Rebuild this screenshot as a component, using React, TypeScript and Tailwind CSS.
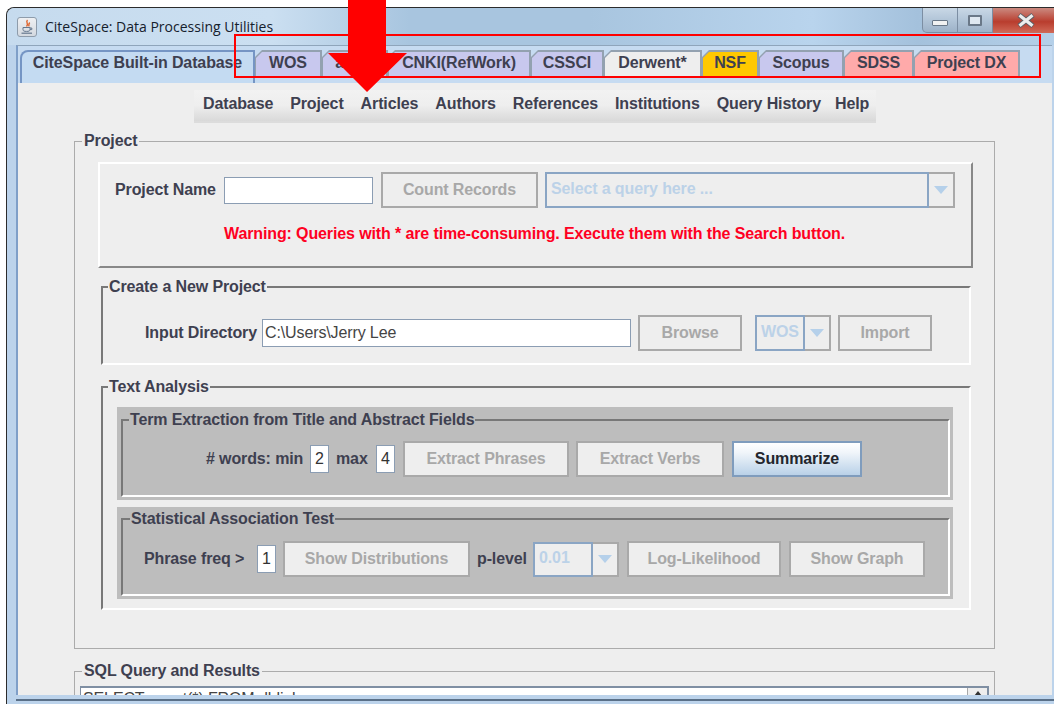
import React from "react";

const sans = "font-['Liberation_Sans',Arial,sans-serif]";

function Tab({ label, width, bg }: { label: string; width: string; bg: string }) {
  return (
    <div className={`${width} h-[27px] shrink-0 pt-[2px] pr-[2px] pl-[1px] bg-[#93a1b0] [clip-path:polygon(7px_0,100%_0,100%_100%,0_100%,0_7px)]`}>
      <div className={`${bg} h-full pb-[3px] flex items-center justify-center [clip-path:polygon(6px_0,100%_0,100%_100%,0_100%,0_6px)] text-[16px] font-bold text-[#3e4050] whitespace-nowrap`}>
        {label}
      </div>
    </div>
  );
}

function Btn({ label, width, className }: { label: string; width: string; className?: string }) {
  return (
    <div className={`${width} ${className ?? ""} h-[36px] shrink-0 flex items-center justify-center border-2 border-[#a9a9a9] bg-[#eeeeee] text-[16px] font-bold text-[#a8a8a8] whitespace-nowrap`}>
      {label}
    </div>
  );
}

function Label({ text, width, className }: { text: string; width: string; className?: string }) {
  return (
    <div className={`${width} ${className ?? ""} shrink-0 text-[16px] font-bold text-[#3e4050] whitespace-nowrap`}>{text}</div>
  );
}

function Caret() {
  return (
    <svg width="14" height="8" viewBox="0 0 14 8">
      <polygon points="0,0 14,0 7,8" fill="#b5d0ea" />
    </svg>
  );
}

function Combo({ text, fieldWidth, arrowWidth, height, className }: { text: string; fieldWidth: string; arrowWidth: string; height: string; className?: string }) {
  return (
    <div className={`${className ?? ""} ${height} shrink-0 flex`}>
      <div className={`${fieldWidth} h-full flex items-center pl-[4px] pb-[2px] border-2 border-[#8aa5c4] bg-[#eeeeee] text-[16px] font-bold text-[#bcd2e8] whitespace-nowrap`}>
        {text}
      </div>
      <div className={`${arrowWidth} h-full flex items-center justify-center border-2 border-l-0 border-[#a9a9a9] bg-[#eeeeee]`}>
        <Caret />
      </div>
    </div>
  );
}

function NumBox({ value, className }: { value: string; className?: string }) {
  return (
    <div className={`${className ?? ""} w-[19px] h-[28px] shrink-0 flex items-center justify-center border border-[#8b9db3] bg-white text-[16px] text-[#333]`}>
      {value}
    </div>
  );
}

function Etched({ title, className, legendClass, children }: { title: string; className: string; legendClass: string; children: React.ReactNode }) {
  return (
    <fieldset className={`${className} block shrink-0 border-2 border-t-[#787878] border-l-[#787878] border-r-white border-b-white`}>
      <legend className={`${legendClass} px-[1px] h-[18px] leading-[18px] text-[16px] font-bold text-[#3e4050] whitespace-nowrap`}>{title}</legend>
      {children}
    </fieldset>
  );
}

function Plain({ title, className, children }: { title: string; className: string; children: React.ReactNode }) {
  return (
    <fieldset className={`${className} block shrink-0 ml-[56px] w-[921px] border border-[#ababab]`}>
      <legend className="ml-[7px] px-[2px] h-[18px] leading-[18px] text-[16px] font-bold text-[#3e4050] whitespace-nowrap">{title}</legend>
      {children}
    </fieldset>
  );
}

function JavaIcon() {
  return (
    <div className="w-[20px] h-[20px] shrink-0 flex items-center justify-center rounded-[3px] border border-[#8e9cab] bg-[linear-gradient(180deg,#eef0f3,#d3d9e0)]">
      <svg width="16" height="16" viewBox="0 0 16 16" fill="none">
        <path d="M8.5 1 C6 3.5 10.5 4.5 7.5 7.5 M10.8 3.6 C9 5 10.5 6 9.6 7.4" stroke="#e0642c" strokeWidth="1.4" />
        <path d="M4 8.5 H11 V10.6 C11 12 9.8 12.4 7.5 12.4 C5.2 12.4 4 12 4 10.6 Z M11 9 H12.8 V10.6 H11" stroke="#65788f" strokeWidth="1" />
        <path d="M2.5 14.2 H13" stroke="#65788f" strokeWidth="1.2" />
      </svg>
    </div>
  );
}

export default function App() {
  return (
    <div className={`${sans} tracking-[-0.12px] relative w-[1054px] h-[704px] overflow-hidden bg-white pt-[7px] pl-[6px]`}>
      {/* Window frame */}
      <div className="w-[1060px] h-[697px] flex flex-col rounded-tl-[8px] border-t border-l border-[#2c2c2c] bg-[#bcd3eb]">
        {/* Title bar */}
        <div className="h-[37px] shrink-0 flex items-start rounded-tl-[8px] bg-[linear-gradient(90deg,#c6dbee_0%,#cbdff1_25%,#a8c5df_38%,#a8c5df_55%,#b9d4ed_76%,#a4c1dc_86%,#b6d1ea_100%)]">
          <div className="ml-[10px] mt-[9px]">
            <JavaIcon />
          </div>
          <div className="ml-[8px] mt-[9px] font-['Open_Sans',sans-serif] tracking-normal text-[14px] leading-[20px] text-[#15202c] whitespace-nowrap">
            CiteSpace: Data Processing Utilities
          </div>
          <div className="ml-auto flex h-[25px] w-[144px] shrink-0">
            <div className="w-[36px] h-full flex items-center justify-center rounded-bl-[5px] border border-t-0 border-[#7c8ea3] bg-[linear-gradient(180deg,#c9d8e6,#b2c5d8_50%,#9db2c8)]">
              <div className="mt-[6px] w-[16px] h-[6px] rounded-[1px] border border-[#6a7888] bg-[#f2f2f2]" />
            </div>
            <div className="w-[35px] h-full flex items-center justify-center border-b border-r border-[#7c8ea3] bg-[linear-gradient(180deg,#c9d8e6,#b2c5d8_50%,#9db2c8)]">
              <div className="w-[14px] h-[11px] rounded-[1px] border-2 border-[#6a7888] bg-[#dfe8f1]" />
            </div>
            <div className="w-[73px] h-full pr-[7px] flex items-center justify-center bg-[linear-gradient(180deg,#cb8a80_0%,#b93d2e_55%,#d06a58_100%)]">
              <svg width="20" height="15" viewBox="0 0 20 15">
                <path d="M3 2 L17 13 M17 2 L3 13" stroke="#5b5f66" strokeWidth="5" />
                <path d="M3.5 2.2 L16.5 12.8 M16.5 2.2 L3.5 12.8" stroke="#ececec" strokeWidth="3.2" />
              </svg>
            </div>
          </div>
        </div>

        {/* Tabbed pane */}
        <div className="ml-[9px] w-[1036px] h-[650px] shrink-0 flex flex-col border-t border-t-[#8fa5bb] border-l-2 border-l-[#7f9fc8] bg-[#c6dbf1]">
          <div className="mt-[4px] h-[27px] shrink-0 flex pl-[2px]">
            <div className="w-[235px] h-[33px] shrink-0 flex items-start justify-center leading-[21px] rounded-tl-[8px] border-2 border-b-0 border-[#7595c4] bg-[#c4dbf2] text-[16px] font-bold text-[#3e4050] whitespace-nowrap">
              CiteSpace Built-in Database
            </div>
            <Tab label="WOS" width="w-[67px]" bg="bg-[#c8c8ee]" />
            <Tab label="arXiv" width="w-[66px]" bg="bg-[#c8c8ee]" />
            <Tab label="CNKI(RefWork)" width="w-[143px]" bg="bg-[#c8c8ee]" />
            <Tab label="CSSCI" width="w-[73px]" bg="bg-[#c8c8ee]" />
            <Tab label="Derwent*" width="w-[98px]" bg="bg-[#eeeeee]" />
            <Tab label="NSF" width="w-[57px]" bg="bg-[#ffc800]" />
            <Tab label="Scopus" width="w-[85px]" bg="bg-[#c8c8ee]" />
            <Tab label="SDSS" width="w-[70px]" bg="bg-[#ffaaaa]" />
            <Tab label="Project DX" width="w-[106px]" bg="bg-[#ffaaaa]" />
          </div>

          {/* Tab content */}
          <div className="mt-[6px] flex-1 min-h-0 flex flex-col overflow-hidden bg-[#eeeeee]">
            <div className="mt-[7px] ml-[176px] w-[682px] h-[33px] shrink-0 flex items-start pt-[2px] gap-[17px] pl-[9px] border-b-2 border-[#dcdcdc] bg-[linear-gradient(180deg,#f2f2f2_0%,#eeeeee_50%,#d9d9d9_100%)] text-[16px] font-bold text-[#3e4050] whitespace-nowrap">
              <span>Database</span>
              <span>Project</span>
              <span>Articles</span>
              <span>Authors</span>
              <span>References</span>
              <span>Institutions</span>
              <span>Query History</span>
              <span className="-ml-[3px]">Help</span>
            </div>

            <Plain title="Project" className="mt-[9px] h-[517px]">
              {/* Project selection */}
              <div className="mt-[12px] ml-[23px] w-[875px] h-[106px] border-2 border-t-white border-l-white border-r-[#888888] border-b-[#888888]">
                <div className="mt-[8px] ml-[15px] flex items-center">
                  <Label text="Project Name" width="w-[101px]" />
                  <div className="ml-[8px] w-[149px] h-[27px] shrink-0 border border-[#8b9db3] bg-white" />
                  <Btn label="Count Records" width="w-[157px]" className="ml-[8px]" />
                  <Combo text="Select a query here ..." fieldWidth="w-[384px]" arrowWidth="w-[26px]" height="h-[36px]" className="ml-[7px]" />
                </div>
                <div className="mt-[17px] ml-[124px] h-[18px] leading-[18px] text-[16px] font-bold text-[#ff0022] whitespace-nowrap">
                  Warning: Queries with * are time-consuming. Execute them with the Search button.
                </div>
              </div>

              <Etched title="Create a New Project" className="mt-[10px] ml-[26px] w-[870px] h-[87px]" legendClass="ml-[5px]">
                <div className="mt-[19px] ml-[42px] flex items-center">
                  <Label text="Input Directory" width="w-[110px]" />
                  <div className="ml-[7px] w-[369px] h-[28px] shrink-0 flex items-center pl-[2px] border border-[#8b9db3] bg-white text-[16px] text-[#444] whitespace-nowrap">
                    C:\Users\Jerry Lee
                  </div>
                  <Btn label="Browse" width="w-[104px]" className="ml-[7px]" />
                  <Combo text="WOS" fieldWidth="w-[50px]" arrowWidth="w-[26px]" height="h-[36px]" className="ml-[13px]" />
                  <Btn label="Import" width="w-[94px]" className="ml-[7px]" />
                </div>
              </Etched>

              <Etched title="Text Analysis" className="mt-[13px] ml-[26px] w-[870px] h-[232px]" legendClass="ml-[5px]">
                {/* Term extraction */}
                <div className="mt-[11px] ml-[14px] w-[836px] h-[93px] pt-[4px] pl-[4px] bg-[#bdbdbd]">
                  <Etched title="Term Extraction from Title and Abstract Fields" className="w-[829px] h-[86px]" legendClass="ml-[6px]">
                    <div className="mt-[12px] ml-[83px] flex items-center">
                      <Label text="# words: min" width="w-[96px]" />
                      <NumBox value="2" className="ml-[8px]" />
                      <Label text="max" width="w-[33px]" className="ml-[7px]" />
                      <NumBox value="4" className="ml-[7px]" />
                      <Btn label="Extract Phrases" width="w-[166px]" className="ml-[8px]" />
                      <Btn label="Extract Verbs" width="w-[148px]" className="ml-[7px]" />
                      <div className="ml-[8px] w-[130px] h-[36px] shrink-0 flex items-center justify-center border-2 border-[#7f9cbd] bg-[linear-gradient(180deg,#ffffff_0%,#f0f5fa_30%,#b9d1e8_100%)] text-[16px] font-bold text-[#22262e]">
                        Summarize
                      </div>
                    </div>
                  </Etched>
                </div>

                {/* Association test */}
                <div className="mt-[7px] ml-[14px] w-[836px] h-[92px] pt-[3px] pl-[4px] bg-[#bdbdbd]">
                  <Etched title="Statistical Association Test" className="w-[829px] h-[86px]" legendClass="ml-[7px]">
                    <div className="mt-[13px] ml-[21px] flex items-center">
                      <Label text="Phrase freq >" width="w-[102px]" />
                      <NumBox value="1" className="ml-[11px]" />
                      <Btn label="Show Distributions" width="w-[187px]" className="ml-[7px]" />
                      <Label text="p-level" width="w-[49px]" className="ml-[7px]" />
                      <Combo text="0.01" fieldWidth="w-[60px]" arrowWidth="w-[26px]" height="h-[35px]" className="ml-[7px]" />
                      <Btn label="Log-Likelihood" width="w-[154px]" className="ml-[8px]" />
                      <Btn label="Show Graph" width="w-[136px]" className="ml-[8px]" />
                    </div>
                  </Etched>
                </div>
              </Etched>
            </Plain>

            <Plain title="SQL Query and Results" className="mt-[13px] h-[120px]">
              <div className="mt-[6px] ml-[5px] w-[909px] h-[60px] flex border-t-2 border-r-2 border-l border-[#7f8fa3] bg-white">
                <div className="flex-1 pl-[2px] pt-[2px] text-[16px] leading-[18px] text-[#444] whitespace-nowrap">SELECT count(*) FROM dblink</div>
                <div className="w-[20px] h-[30px] flex items-start justify-center pt-[3px] border-l border-[#a9a9a9] bg-[#eeeeee]">
                  <svg width="8" height="5" viewBox="0 0 8 5">
                    <polygon points="0,5 8,5 4,0" fill="#333" />
                  </svg>
                </div>
              </div>
            </Plain>
          </div>
        </div>

        {/* Bottom edge of the window */}
        <div className="mt-[4px] ml-[9px] h-[2px] shrink-0 bg-[#5a7088]" />
      </div>

      {/* Annotation drawn over the window */}
      <div className="absolute left-[234px] top-[34px] w-[807px] h-[44px] border-2 border-[#ff0000]" />
      <svg className="absolute left-[328px] top-0" width="80" height="92" viewBox="0 0 80 92">
        <polygon points="20,0 58,0 58,53 79,53 39,92 0,53 20,53" fill="#ff0000" />
      </svg>
    </div>
  );
}
